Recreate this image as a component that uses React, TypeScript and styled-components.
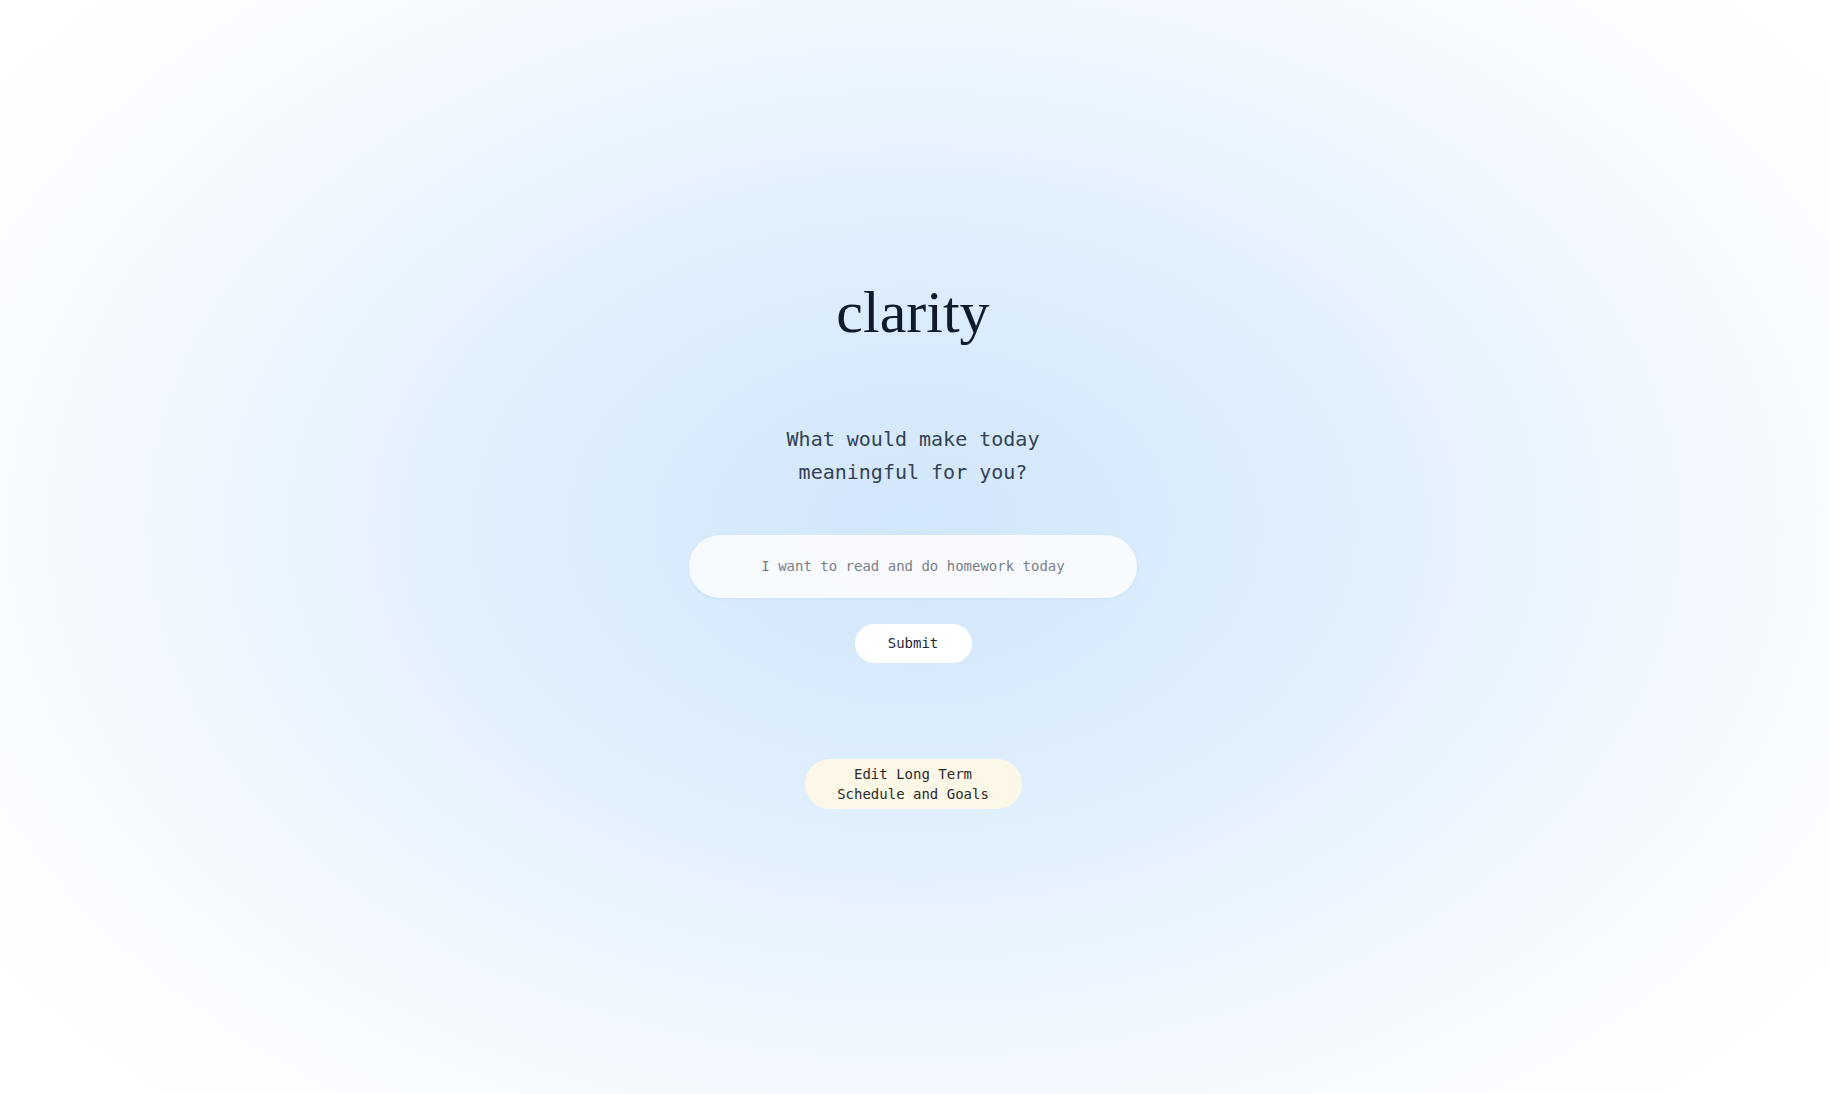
import React, { useState } from "react";
import styled, { createGlobalStyle } from "styled-components";

const GlobalStyle = createGlobalStyle`
  html, body {
    margin: 0;
    padding: 0;
    height: 100%;
  }
  body {
    background: #ffffff;
    font-family: "DejaVu Sans Mono", "Liberation Mono", monospace;
  }
  #root {
    min-height: 100vh;
  }
  * { box-sizing: border-box; }
`;

const Page = styled.main`
  min-height: 100vh;
  display: flex;
  flex-direction: column;
  align-items: center;
  justify-content: center;
  background: radial-gradient(
    ellipse 62% 72% at 50% 48%,
    #d3e7fb 0%,
    #d9ebfc 22%,
    #e6f2fe 48%,
    #f4f9ff 72%,
    #ffffff 100%
  );
  padding: 0 3px 10px 0;
`;

const Title = styled.h1`
  margin: 0;
  font-family: "Liberation Serif", "Times New Roman", serif;
  font-weight: 400;
  font-size: 60px;
  line-height: 72px;
  letter-spacing: 0;
  color: #0f1b2d;
`;

const Prompt = styled.p`
  margin: 75px 0 0;
  font-family: "DejaVu Sans Mono", "Liberation Mono", monospace;
  font-size: 20px;
  line-height: 33px;
  color: #334155;
  text-align: center;
`;

const Form = styled.form`
  margin-top: 46px;
  display: flex;
  flex-direction: column;
  align-items: center;
  gap: 26px;
`;

const Input = styled.input`
  width: 448px;
  height: 63px;
  border: none;
  outline: none;
  border-radius: 32px;
  background: rgba(249, 251, 254, 0.96);
  box-shadow: 0 1px 3px rgba(148, 180, 215, 0.15);
  text-align: center;
  font-family: "DejaVu Sans Mono", "Liberation Mono", monospace;
  font-size: 14px;
  color: #334155;
  padding: 0 24px;

  &::placeholder {
    color: #7a7f88;
  }
`;

const PillButton = styled.button<{ $tone: "white" | "cream" }>`
  border: none;
  cursor: pointer;
  font-family: "DejaVu Sans Mono", "Liberation Mono", monospace;
  font-size: 14px;
  line-height: 20px;
  color: ${(p) => (p.$tone === "white" ? "#1f2937" : "#2b2b2b")};
  background: ${(p) => (p.$tone === "white" ? "#ffffff" : "#fcf7e7")};
  border-radius: 999px;
  text-align: center;
`;

const SubmitButton = styled(PillButton)`
  width: 117px;
  height: 39px;
  padding: 0;
`;

const EditButton = styled(PillButton)`
  margin-top: 96px;
  width: 217px;
  height: 50px;
  padding: 5px 20px;
`;

export default function App() {
  const [value, setValue] = useState("");
  return (
    <>
      <GlobalStyle />
      <Page>
        <Title>clarity</Title>
        <Prompt>
          What would make today
          <br />
          meaningful for you?
        </Prompt>
        <Form onSubmit={(e) => e.preventDefault()}>
          <Input
            value={value}
            onChange={(e) => setValue(e.target.value)}
            placeholder="I want to read and do homework today"
          />
          <SubmitButton type="submit" $tone="white">
            Submit
          </SubmitButton>
        </Form>
        <EditButton type="button" $tone="cream">
          Edit Long Term
          <br />
          Schedule and Goals
        </EditButton>
      </Page>
    </>
  );
}
